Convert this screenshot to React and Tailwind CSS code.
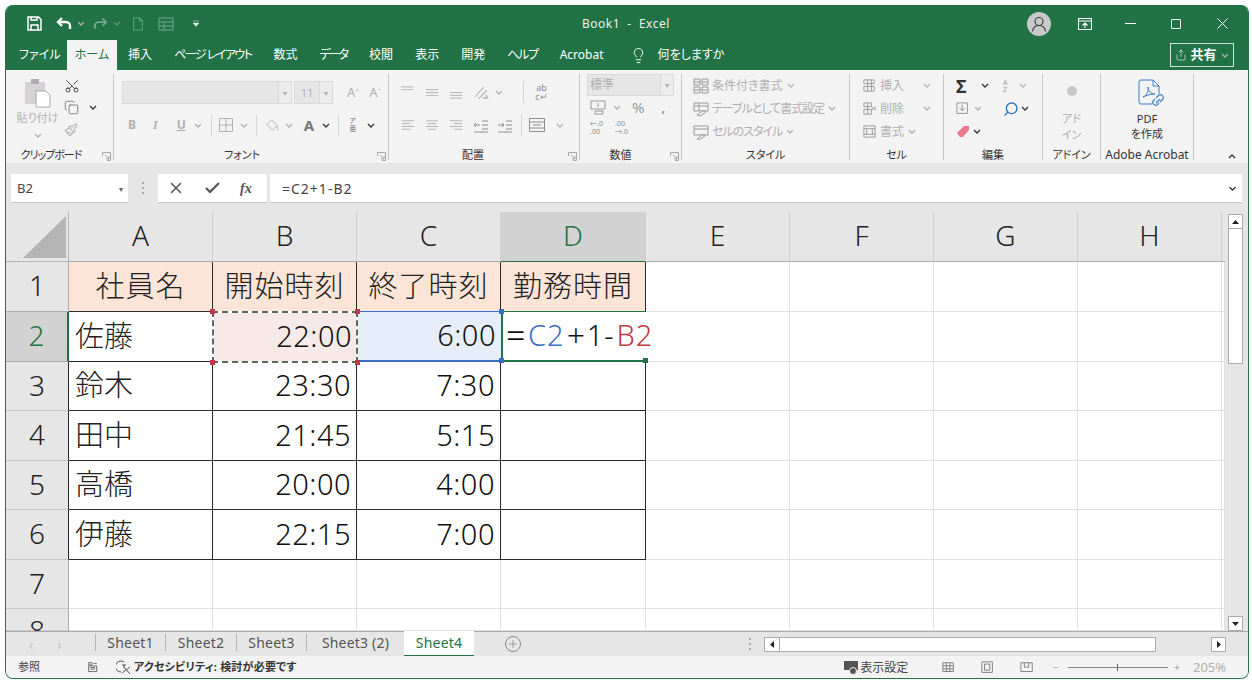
import React from "react";
import { Scissors, Copy, Paintbrush, Lightbulb, Share, Search, Plus } from "lucide-react";

const Chev = ({ className = "", dark = false, up = false }) => (
    <svg width="8" height="5" viewBox="0 0 8 5" fill="none" stroke={dark ? "#333" : "#b0b0b0"} strokeWidth="1.3" className={`shrink-0 ${className}`}>
        <path d={up ? "M1 4l3-3 3 3" : "M1 1l3 3 3-3"} />
    </svg>
);

const Launcher = () => (
    <svg width="9" height="9" viewBox="0 0 9 9" fill="none" stroke="#a8a8a8" strokeWidth="1" className="absolute right-[2px] top-[3px]">
        <path d="M.5 4V.5H8.500V8.500H5M3 3l4 4M7 4v3H4" />
    </svg>
);

const Line = ({ d, size = 16, color = "#b0b0b0", className = "" }) => (
    <svg width={size} height={size} viewBox="0 0 16 16" fill="none" stroke={color} strokeWidth="1" className={`shrink-0 ${className}`}>
        <path d={d} />
    </svg>
);

const Group = ({ width, label, launcher, children, border = true, labelClass = "" }) => (
    <div className={`relative flex h-[86px] mt-[4px] shrink-0 flex-col ${width} ${border ? "border-r border-[#c6c6c6]" : ""}`}>
        <div className="flex-1">{children}</div>
        <div className={`relative top-px h-[12px] text-center text-[11px] leading-[12px] whitespace-nowrap text-[#333] ${labelClass}`}>
            {label}
            {launcher && <Launcher />}
        </div>
    </div>
);

const columns = ["A", "B", "C", "D", "E", "F", "G", "H"];
const people = [
    ["佐藤", "22:00", "6:00"],
    ["鈴木", "23:30", "7:30"],
    ["田中", "21:45", "5:15"],
    ["高橋", "20:00", "4:00"],
    ["伊藤", "22:15", "7:00"],
];
const sheets = [
    ["Sheet1", "w-[70px]"],
    ["Sheet2", "w-[71px]"],
    ["Sheet3", "w-[70px]"],
    ["Sheet3 (2)", "w-[98px]"],
];
const blankCell = "border-r border-b border-[#e1e1e1] bg-white";
const tableCell = "border-r border-b border-[#2a2a2a] bg-white";
const rowHead = "flex items-center justify-center bg-[#e6e6e6] pb-[3px] text-[28px] font-light text-[#222]";

const Corner = ({ pos, color }) => <span className={`absolute z-20 h-[5px] w-[5px] ${pos} ${color}`} />;

function Sheet() {
    return (
        <div className="grid h-[419px] grid-cols-[63px_144px_144px_144px_145px_144px_144px_144px_144px_3px] grid-rows-[50px_50px_50px_49px_50px_49px_50px_49px_22px] overflow-hidden">
            {/* column headers */}
            <div className="flex items-end justify-end border-r border-b border-[#b4b4b4] bg-[#e6e6e6] pr-[2px] pb-[3px]">
                <svg width="43" height="42" viewBox="0 0 43 42"><path d="M43 0V42H0Z" fill="#b4b4b4" /></svg>
            </div>
            {columns.map((c) => (
                <div key={c} className={`flex items-center justify-center border-r border-[#cfcfcf] pb-[3px] text-[28px] font-light ${c === "D" ? "border-b border-b-[#217346] bg-[#d2d2d2] text-[#217346]" : "border-b border-b-[#ababab] bg-[#e6e6e6] text-[#222]"}`}>
                    {c}
                </div>
            ))}
            <div className="border-b border-[#ababab] bg-[#e6e6e6]" />

            {/* row 1 */}
            <div className={`${rowHead} border-r border-b border-[#ababab]`}>1</div>
            {["社員名", "開始時刻", "終了時刻", "勤務時間"].map((t, i) => (
                <div key={t} className={`flex items-center justify-center border-r border-b bg-[#fce4d6] pb-[2px] text-[29px] font-light tracking-[1px] text-[#222] ${i === 3 ? "border-r-[#2a2a2a] border-b-[#217346]" : i === 2 ? "border-r-[#2a2a2a] border-b-[#3c6fc4]" : "border-[#2a2a2a]"}`}>
                    {t}
                </div>
            ))}
            <div className={blankCell} /><div className={blankCell} /><div className={blankCell} /><div className={blankCell} /><div className={blankCell} />

            {/* rows 2 to 6 */}
            {people.map((p, i) => (
                <React.Fragment key={p[0]}>
                    <div className={`${rowHead} border-b border-r ${i === 0 ? "border-r-2 border-r-[#217346] border-b-[#ababab] !bg-[#d2d2d2] !text-[#217346]" : "border-r-[#2a2a2a] border-b-[#c8c8c8]"}`}>{i + 2}</div>
                    <div className={`${tableCell} flex items-center pb-[2px] pl-[6px] text-[29px] font-light text-[#222]`}>{p[0]}</div>
                    <div className={`relative flex items-center justify-end pr-[5px] pb-[2px] text-[29px] font-light tracking-[0.5px] text-[#111] ${i === 0 ? "bg-[#f8e9e9]" : tableCell}`}>
                        {p[1]}
                        {i === 0 && (
                            <>
                                <span className="absolute -inset-px z-10 border-2 border-white" />
                                <span className="absolute -inset-px z-10 border-2 border-dashed border-[#5b6b58]" />
                                <Corner pos="-left-[3px] -top-[3px]" color="bg-[#c1394a]" />
                                <Corner pos="-right-[3px] -top-[3px]" color="bg-[#c1394a]" />
                                <Corner pos="-left-[3px] -bottom-[3px]" color="bg-[#c1394a]" />
                                <Corner pos="-right-[3px] -bottom-[3px]" color="bg-[#c1394a]" />
                            </>
                        )}
                    </div>
                    <div className={`relative flex items-center justify-end pr-[5px] pb-[2px] text-[29px] font-light tracking-[0.5px] text-[#111] ${i === 0 ? "border-b-2 border-[#3c6fc4] bg-[#e6eef9]" : tableCell}`}>
                        {p[2]}
                        {i === 0 && (
                            <>
                                <Corner pos="-right-[3px] -top-[3px]" color="bg-[#3c6fc4]" />
                                <Corner pos="-right-[3px] -bottom-[3px]" color="bg-[#3c6fc4]" />
                            </>
                        )}
                    </div>
                    {i === 0 ? (
                        <div className="relative z-10 flex items-center border-b-2 border-l-2 border-[#217346] bg-white pb-[2px] pl-[3px] text-[29px] font-light tracking-[1px] whitespace-nowrap text-[#111]">
                            <span className="mr-[2px] inline-block w-[20px] text-center text-[34px] leading-none">=</span>
                            <span className="text-[#3c6fc4]">C2</span>
                            <span className="mx-[2px] inline-block w-[18px] text-center text-[32px] leading-none">+</span>
                            <span>1-</span>
                            <span className="ml-[2px] text-[#c1393f]">B2</span>
                            <Corner pos="-right-[2px] -bottom-[3px]" color="bg-[#217346]" />
                        </div>
                    ) : (
                        <div className={tableCell} />
                    )}
                    <div className={blankCell} /><div className={blankCell} /><div className={blankCell} /><div className={blankCell} /><div className={blankCell} />
                </React.Fragment>
            ))}

            {/* rows 7 and 8 */}
            {[7, 8].map((n) => (
                <React.Fragment key={n}>
                    <div className={`${rowHead} border-r border-b border-r-[#ababab] border-b-[#c8c8c8] ${n === 8 ? "items-start" : ""}`}>{n}</div>
                    {columns.map((c) => <div key={c} className={blankCell} />)}
                    <div className={blankCell} />
                </React.Fragment>
            ))}
        </div>
    );
}

function VScroll() {
    const btn = "flex h-[15px] items-center justify-center border border-[#ababab] bg-white";
    return (
        <div className="flex w-[22px] flex-col bg-[#e6e6e6] pt-[2px] pr-[4px] pl-[3px]">
            <div className={btn}><svg width="7" height="4"><path d="M3.500 0L7 4H0Z" fill="#222" /></svg></div>
            <div className="h-[135px] border border-t-0 border-[#ababab] bg-white" />
            <div className={`${btn} mt-auto`}><svg width="7" height="4"><path d="M0 0H7L3.500 4Z" fill="#222" /></svg></div>
        </div>
    );
}

export default function App() {
    return (
        <div className="h-[685px] w-[1252px] overflow-hidden bg-white pt-[5px] pl-[5px] font-['Noto_Sans','Noto_Sans_CJK_JP',sans-serif] [font-feature-settings:'palt']">
            <div className="flex h-[674px] w-[1244px] flex-col overflow-hidden rounded-[8px] border-x border-b border-[#217346] bg-[#e6e6e6]">
                {/* title bar */}
                <div className="flex h-[35px] shrink-0 items-center bg-[#217346] pt-[2px] pl-[21px] text-white">
                    <svg width="15" height="15" viewBox="0 0 15 15" fill="none" stroke="#fff" strokeWidth="1.500"><path d="M1 1h10.500L14 3.500V14H1ZM4 14V9h7v5M4 1v3h6V1" /></svg>
                    <svg width="16" height="14" viewBox="0 0 16 14" fill="none" stroke="#fff" strokeWidth="2.400" className="ml-[14px]"><path d="M6 1L2 5l4 4M2 5h8a4 4 0 0 1 4 4v3" /></svg>
                    <Chev className="ml-[5px]" />
                    <svg width="15" height="14" viewBox="0 0 16 14" fill="none" stroke="#6fa88a" strokeWidth="2" className="ml-[8px]"><path d="M10 1l4 4-4 4M14 5H6a4 4 0 0 0-4 4v3" /></svg>
                    <Chev className="ml-[5px] opacity-50" />
                    <Line size={14} color="#6fa88a" d="M3 1h7l3 3v11H3ZM10 1v3h3" className="ml-[10px]" />
                    <Line size={16} color="#6fa88a" d="M1 2h14v12H1ZM1 6h14M1 10h14M6 6v8" className="ml-[13px]" />
                    <svg width="6" height="7" viewBox="0 0 6 7" className="ml-[19px]"><path d="M0 1h6M0 3h6L3 6.500Z" fill="#dfeee6" stroke="#dfeee6" strokeWidth=".5" /></svg>
                    <span className="ml-[383px] w-[88px] text-[12px] tracking-[0.5px] whitespace-nowrap text-[#e9f2ed]">Book1&nbsp; - &nbsp;Excel</span>
                    <div className="ml-[357px] flex h-[24px] w-[24px] items-center justify-center rounded-full bg-[#c9c9c9]">
                        <svg width="16" height="16" viewBox="0 0 16 16" fill="none" stroke="#3b3b3b" strokeWidth="1.100"><circle cx="8" cy="5.500" r="4" /><path d="M1.500 15.500c.5-4 3-6 6.500-6s6 2 6.500 6" /></svg>
                    </div>
                    <svg width="14" height="12" viewBox="0 0 14 12" fill="none" stroke="#fff" strokeWidth="1.100" className="ml-[27px]"><path d="M.5.500h13v11H.5ZM.5 3h13M7 10V5M4.500 7.500L7 5l2.500 2.500" /></svg>
                    <span className="ml-[33px] h-px w-[11px] bg-white" />
                    <span className="ml-[35px] h-[10px] w-[10px] rounded-[1px] border border-white" />
                    <svg width="11" height="11" viewBox="0 0 11 11" stroke="#fff" className="ml-[36px]"><path d="M.5.500l10 10M10.500.500l-10 10" /></svg>
                </div>

                {/* tabs */}
                <div className="flex h-[30px] shrink-0 items-stretch bg-[#217346] text-[12px] whitespace-nowrap text-white">
                    <span className="ml-[13px] flex w-[33px] items-center">ファイル</span>
                    <span className="ml-[15px] flex w-[50px] items-center justify-center bg-[#f3f3f3] text-[#217346]">ホーム</span>
                    <div className="ml-[11px] flex items-center gap-[22px]">
                        <span>挿入</span>
                        <span className="tracking-[-1.5px]">ページ レイアウト</span>
                        <span>数式</span>
                        <span className="tracking-[-2px]">データ</span>
                        <span>校閲</span>
                        <span>表示</span>
                        <span>開発</span>
                        <span className="tracking-[-1.3px]">ヘルプ</span>
                        <span>Acrobat</span>
                    </div>
                    <Lightbulb size={17} strokeWidth={1.300} className="ml-[26px] self-center" />
                    <span className="ml-[11px] flex items-center">何をしますか</span>
                    <div className="my-[3px] ml-auto mr-[14px] flex w-[64px] items-center justify-center gap-[3px] border border-[#cfe3d8] text-[13px] font-bold">
                        <Share size={12} strokeWidth={1.200} />
                        共有
                        <Chev className="ml-[1px]" />
                    </div>
                </div>

                {/* ribbon */}
                <div className="flex h-[93px] shrink-0 bg-[#f3f3f3] text-[#b0b0b0]">
                    <Group width="w-[108px]" label="クリップボード" launcher labelClass="pr-[17px] tracking-[-1px]">
                        <div className="flex pt-[4px]">
                            <div className="flex w-[55px] flex-col items-center pl-[8px]">
                                <svg width="28" height="30" viewBox="0 0 28 30">
                                    <path d="M1 4h20v22H1Z" fill="#d6d2d6" /><path d="M7 1h8v5H7Z" fill="#b0adb0" />
                                    <path d="M12 13h10l4 4v12H12Z" fill="#fff" stroke="#a8a8a8" />
                                </svg>
                                <span className="mt-[2px] text-[11px] whitespace-nowrap">貼り付け</span>
                                <Chev className="mt-[6px]" />
                            </div>
                            <div className="flex flex-col pl-[3px]">
                                <Scissors size={16} strokeWidth={1.300} color="#333" className="rotate-[-90deg]" />
                                <div className="mt-[6px] flex items-center">
                                    <Copy size={15} strokeWidth={1.100} color="#555" />
                                    <Chev dark className="ml-[10px]" />
                                </div>
                                <Paintbrush size={14} color="#b9b9b9" className="mt-[8px]" />
                            </div>
                        </div>
                    </Group>

                    <Group width="w-[275px]" label="フォント" launcher labelClass="pr-[18px]">
                        <div className="flex h-[30px] items-start pt-[7px] pl-[8px]">
                            <div className="h-[23px] w-[157px] border border-[#d9d9d9] bg-[#e6e6e6]" />
                            <div className="flex h-[23px] w-[13px] items-center justify-center border-y border-r border-[#d9d9d9] bg-[#ececec] text-[8px]">▾</div>
                            <div className="ml-[2px] h-[23px] w-[26px] border border-[#d9d9d9] bg-[#e6e6e6] text-center text-[11px] leading-[21px]">11</div>
                            <div className="flex h-[23px] w-[13px] items-center justify-center border-y border-r border-[#d9d9d9] bg-[#ececec] text-[8px]">▾</div>
                            <span className="ml-[14px] text-[13px] leading-[22px]">A<sup className="text-[7px]">^</sup></span>
                            <span className="ml-[10px] text-[13px] leading-[22px]">A<sup className="text-[7px]">ˇ</sup></span>
                        </div>
                        <div className="mt-[9px] flex h-[24px] items-center pl-[11px] text-[12px] font-bold">
                            <span className="w-[14px] text-center">B</span>
                            <span className="ml-[14px] font-['Liberation_Serif',serif] italic">I</span>
                            <span className="ml-[19px] underline">U</span>
                            <Chev className="ml-[8px]" />
                            <span className="ml-[9px] h-[21px] w-px bg-[#d4d4d4]" />
                            <Line size={16} d="M1.500 1.500h13v13h-13ZM8 1.500v13M1.500 8h13" className="ml-[6px]" />
                            <Chev className="ml-[6px]" />
                            <span className="ml-[8px] h-[21px] w-px bg-[#d4d4d4]" />
                            <Line size={15} d="M7 2l6 6-5 5-6-6ZM13 9l1 4" className="ml-[8px]" />
                            <Chev className="ml-[5px]" />
                            <span className="ml-[11px] text-[15px] leading-none text-[#777]">A</span>
                            <Chev dark className="ml-[8px]" />
                            <span className="ml-[8px] h-[21px] w-px bg-[#d4d4d4]" />
                            <span className="ml-[7px] flex w-[13px] flex-col items-center text-[7px] leading-[8px] font-normal text-[#777]"><span>ア</span><span>亜</span></span>
                            <Chev dark className="ml-[8px]" />
                        </div>
                    </Group>

                    <Group width="w-[191px]" label="配置" launcher labelClass="pr-[22px]">
                        <div className="flex h-[30px] items-center pt-[6px] pl-[11px]">
                            <Line size={15} d="M1 2h13M1 5h13" />
                            <Line size={15} d="M1 5h13M1 8h13M1 11h13" className="ml-[10px]" />
                            <Line size={15} d="M1 8h13M1 11h13M1 14h13" className="ml-[9px]" />
                            <Line size={17} d="M2 12L10 3M5 14L13 6M9 13h5M12 10l2 3-3 1" className="ml-[9px]" />
                            <Chev className="ml-[5px]" />
                            <span className="ml-[20px] h-[22px] w-px bg-[#d4d4d4]" />
                            <span className="ml-[10px] w-[15px] text-center text-[9px] leading-[9px] text-[#8a8a8a]">ab<br />c↵</span>
                        </div>
                        <div className="mt-[7px] flex h-[28px] items-center pl-[12px]">
                            <Line size={15} d="M1 3h13M1 6h9M1 9h13M1 12h9" />
                            <Line size={15} d="M1 3h13M3 6h9M1 9h13M3 12h9" className="ml-[9px]" />
                            <Line size={15} d="M1 3h13M5 6h9M1 9h13M5 12h9" className="ml-[9px]" />
                            <Line size={16} color="#8f8f8f" d="M1 8h6M3 6L1 8l2 2M9 4h6M9 8h6M9 12h6M1 15h14" className="ml-[9px]" />
                            <Line size={16} color="#8f8f8f" d="M7 8H1M5 6l2 2-2 2M9 4h6M9 8h6M9 12h6M1 15h14" className="ml-[8px]" />
                            <span className="ml-[8px] h-[22px] w-px bg-[#d4d4d4]" />
                            <Line size={16} color="#8f8f8f" d="M.5 1.500h15v13H.5ZM.5 5h15M.5 11h15M4 8h8" className="ml-[7px]" />
                            <Chev className="ml-[11px]" />
                        </div>
                    </Group>

                    <Group width="w-[102px]" label="数値" launcher labelClass="pr-[20px]">
                        <div className="flex pl-[7px]">
                            <div className="h-[22px] w-[74px] border border-[#d9d9d9] bg-[#e6e6e6] pl-[2px] text-[12px] leading-[20px]">標準</div>
                            <div className="flex h-[22px] w-[13px] items-center justify-center border-y border-r border-[#d9d9d9] bg-[#ececec] text-[8px]">▾</div>
                        </div>
                        <div className="flex h-[22px] items-center pl-[10px]">
                            <Line size={16} color="#9a9a9a" d="M1 2h14v8H1ZM8 4v4M5 12h8v3H5Z" />
                            <Chev className="ml-[7px]" />
                            <span className="ml-[11px] text-[15px] leading-none text-[#999]">%</span>
                            <span className="ml-[17px] text-[13px] leading-none font-bold text-[#999]">,</span>
                        </div>
                        <div className="mt-[2px] flex items-center gap-[9px] pl-[10px] text-[7px] leading-[8px]">
                            <span className="w-[16px] text-[#8a8a8a]">←.0<br />.00</span>
                            <span className="w-[16px] text-[#8a8a8a]">.00<br />→.0</span>
                        </div>
                    </Group>

                    <Group width="w-[168px]" label="スタイル">
                        <div className="flex flex-col pl-[11px] text-[12px] leading-[23px] whitespace-nowrap">
                            <div className="flex items-center">
                                <Line size={16} color="#999" d="M1 1h6v6H1ZM9 1h6v6H9ZM1 9h6v6H1ZM9 9h6v6H9ZM1 4h6M9 4h6M1 12h6M9 12h6" />
                                <span className="ml-[3px]">条件付き書式</span><Chev className="ml-[4px]" />
                            </div>
                            <div className="flex items-center">
                                <Line size={16} color="#999" d="M1 2h14v8H1ZM1 5h14M6 2v8M4 14l7-5 2 2-6 4Z" />
                                <span className="ml-[3px] tracking-[-1px]">テーブルとして書式設定</span><Chev className="ml-[4px]" />
                            </div>
                            <div className="flex items-center">
                                <Line size={16} color="#999" d="M1 2h14v9H1ZM1 5h14M4 15l6-5 2 2-6 4Z" />
                                <span className="ml-[3px] tracking-[-1px]">セルのスタイル</span><Chev className="ml-[4px]" />
                            </div>
                        </div>
                    </Group>

                    <Group width="w-[94px]" label="セル">
                        <div className="flex flex-col pl-[12px] text-[12px] leading-[23px]">
                            <div className="flex items-center">
                                <Line size={15} color="#999" d="M2 2h11v4H2ZM2 9h11v5H2ZM6 2v12M10 2v12" />
                                <span className="ml-[3px] w-[24px]">挿入</span><Chev className="ml-[19px]" />
                            </div>
                            <div className="flex items-center">
                                <Line size={15} color="#999" d="M2 2h8v4H2ZM2 9h8v5H2ZM6 2v12M10 6l5 4M15 6l-5 4" />
                                <span className="ml-[3px] w-[24px]">削除</span><Chev className="ml-[19px]" />
                            </div>
                            <div className="flex items-center">
                                <Line size={15} color="#999" d="M2 2h12v12H2ZM2 5h12M2 11h12M5 5v6M11 5v6" />
                                <span className="ml-[3px] w-[24px]">書式</span><Chev className="ml-[4px]" />
                            </div>
                        </div>
                    </Group>

                    <Group width="w-[99px]" label="編集">
                        <div className="flex flex-col pl-[12px]">
                            <div className="flex h-[23px] items-center">
                                <span className="w-[14px] text-[18px] leading-none font-bold text-[#333]">Σ</span>
                                <Chev dark className="ml-[11px]" />
                                <span className="ml-[14px] w-[12px] text-[7px] leading-[7px] text-[#999]">A<br />Z</span>
                                <Chev className="ml-[4px]" />
                            </div>
                            <div className="flex h-[23px] items-center">
                                <Line size={14} color="#888" d="M1 1h12v12H1ZM7 3v7M4 7l3 3 3-3" />
                                <Chev className="ml-[4px]" />
                                <Search size={16} color="#2a6fc0" strokeWidth={2} className="ml-[21px] scale-x-[-1]" />
                                <Chev dark className="ml-[2px]" />
                            </div>
                            <div className="flex h-[23px] items-center">
                                <svg width="14" height="13" viewBox="0 0 14 13"><path d="M1 8l7-7h5v4l-6 7H4Z" fill="#e8798c" /></svg>
                                <Chev dark className="ml-[3px]" />
                            </div>
                        </div>
                    </Group>

                    <Group width="w-[58px]" label="アドイン">
                        <div className="flex flex-col items-center text-[11px] leading-[16px]">
                            <span className="mt-[12px] h-[10px] w-[10px] rounded-full bg-[#c8c8c8]" />
                            <span className="mt-[15px]">アド</span>
                            <span>イン</span>
                        </div>
                    </Group>

                    <Group width="w-[93px]" label="Adobe Acrobat" labelClass="text-[12px]">
                        <div className="flex flex-col items-center text-[11px] leading-[15px] text-[#333]">
                            <svg width="28" height="30" viewBox="0 0 28 30" fill="none" stroke="#3f7fd0" strokeWidth="1" className="mt-[5px] ml-[37px] self-start">
                                <path d="M14 25H3a2 2 0 0 1-2-2V3a2 2 0 0 1 2-2h12l6 6v8M15 1v6h6M5 18c3-1 6-5 5-10 0 4 3 7 7 7-4 0-8 1-12 3Z" />
                                <path d="M18 19l3-3a3 3 0 0 1 4 4l-3 3M21 24l-2 2a3 3 0 0 1-4-4l2-2M18 24l4-4" strokeWidth="1.300" />
                            </svg>
                            <span className="mt-[2px]">PDF</span>
                            <span>を作成</span>
                        </div>
                    </Group>

                    <div className="flex flex-1 items-end justify-end pr-[11px] pb-[4px]">
                        <Chev dark up className="w-[10px]" />
                    </div>
                </div>

                {/* formula bar */}
                <div className="flex h-[49px] shrink-0 items-start bg-[#e6e6e6] pt-[11px] pl-[5px]">
                    <div className="flex h-[29px] w-[117px] items-center justify-between border-b border-[#c8c8c8] bg-white pt-[2px] pr-[5px] pl-[6px] text-[13px] text-[#444]">
                        B2
                        <span className="text-[8px] text-[#666]">▾</span>
                    </div>
                    <span className="mt-[8px] ml-[14px] flex h-[12px] flex-col justify-between">
                        <i className="h-[2px] w-[2px] bg-[#aaa]" /><i className="h-[2px] w-[2px] bg-[#aaa]" /><i className="h-[2px] w-[2px] bg-[#aaa]" />
                    </span>
                    <div className="ml-[14px] flex h-[29px] w-[109px] items-center border-b border-[#c8c8c8] bg-white pl-[12px]">
                        <svg width="12" height="12" viewBox="0 0 12 12" stroke="#555" strokeWidth="1.500"><path d="M1 1l10 10M11 1L1 11" /></svg>
                        <svg width="15" height="12" viewBox="0 0 15 12" fill="none" stroke="#555" strokeWidth="2.200" className="ml-[23px]"><path d="M1 6l4 4 9-9" /></svg>
                        <span className="ml-[20px] font-['Liberation_Serif',serif] text-[14px] font-bold italic text-[#555]">fx</span>
                    </div>
                    <div className="ml-[3px] flex h-[29px] w-[972px] items-center justify-between border-b border-[#c8c8c8] bg-white pr-[5px] pl-[12px] text-[14px] tracking-[1px] text-[#444]">
                        =C2+1-B2
                        <Chev dark className="w-[9px]" />
                    </div>
                </div>

                {/* sheet */}
                <div className="flex h-[419px] shrink-0">
                    <Sheet />
                    <VScroll />
                </div>

                {/* sheet tabs */}
                <div className="flex h-[25px] shrink-0 items-stretch border-t border-[#ababab] bg-[#e6e6e6] text-[14px] tracking-[0.2px] text-[#555]">
                    <span className="ml-[23px] flex w-[28px] items-center text-[#c4c4c4]">‹</span>
                    <span className="flex w-[38px] items-center text-[#c4c4c4]">›</span>
                    <div className="mt-[2px] mb-[5px] flex">
                        {sheets.map(([name, w]) => (
                            <span key={name} className={`flex items-center justify-center border-l border-[#b4b4b4] ${w}`}>{name}</span>
                        ))}
                    </div>
                    <span className="-mt-px mb-[-1px] flex w-[70px] items-center justify-center border-b-2 border-[#217346] bg-white pb-[1px] text-[#217346]">Sheet4</span>
                    <span className="mt-[4px] ml-[31px] flex h-[16px] w-[16px] items-center justify-center rounded-full border border-[#8a8a8a]"><Plus size={12} strokeWidth={1} /></span>
                    <span className="mt-[6px] ml-[228px] flex h-[12px] flex-col justify-between">
                        <i className="h-[2px] w-[2px] bg-[#aaa]" /><i className="h-[2px] w-[2px] bg-[#aaa]" /><i className="h-[2px] w-[2px] bg-[#aaa]" />
                    </span>
                    <div className="mt-[5px] ml-[13px] flex h-[15px] w-[462px] items-stretch">
                        <span className="flex w-[16px] items-center justify-center border border-[#ababab] bg-white"><svg width="4" height="7"><path d="M4 0V7L0 3.500Z" fill="#222" /></svg></span>
                        <span className="w-[376px] border-y border-r border-[#ababab] bg-white" />
                        <span className="ml-auto flex w-[15px] items-center justify-center border border-[#ababab] bg-white"><svg width="4" height="7"><path d="M0 0V7L4 3.500Z" fill="#222" /></svg></span>
                    </div>
                </div>

                {/* status bar */}
                <div className="flex flex-1 items-center bg-[#f3f3f3] pt-[1px] text-[11px] text-[#444]">
                    <span className="ml-[12px]">参照</span>
                    <Line size={13} color="#555" d="M2 6h10v7H2ZM2 2h4v3H2ZM8 3h4M4 8h6M4 10h6" className="ml-[47px]" />
                    <svg width="16" height="15" viewBox="0 0 16 15" fill="none" stroke="#555" className="ml-[16px]"><path d="M8 2a5.500 5.500 0 1 0-3 10M10 5H6M8 5v3M6 13l8-6M8 7l6 7" /></svg>
                    <span className="ml-[2px] font-bold tracking-[0.2px] text-[#333]">アクセシビリティ: 検討が必要です</span>
                    <svg width="15" height="15" viewBox="0 0 15 15" className="ml-[548px]"><path d="M0 1h14v9H0Z" fill="#555" /><circle cx="9" cy="11" r="3.500" fill="#555" stroke="#f3f3f3" /></svg>
                    <span className="ml-[1px] text-[12px]">表示設定</span>
                    <Line size={14} color="#777" d="M1 2h12v10H1ZM5 2v10M9 2v10M1 5.500h12M1 9h12" className="ml-[34px]" />
                    <Line size={14} color="#777" d="M1 1h12v12H1ZM4 3.500h6v7H4Z" className="ml-[25px]" />
                    <Line size={14} color="#777" d="M1 2h13v10H1ZM5 2v5h5V2" className="ml-[25px]" />
                    <span className="ml-[18px] text-[#aaa]">−</span>
                    <div className="relative ml-[9px] h-px w-[100px] bg-[#888]">
                        <span className="absolute left-[49px] -top-[3px] h-[7px] w-px bg-[#666]" />
                    </div>
                    <span className="ml-[6px] text-[#aaa]">+</span>
                    <span className="ml-[13px] text-[13px] text-[#b0b0b0]">205%</span>
                </div>
            </div>
        </div>
    );
}
